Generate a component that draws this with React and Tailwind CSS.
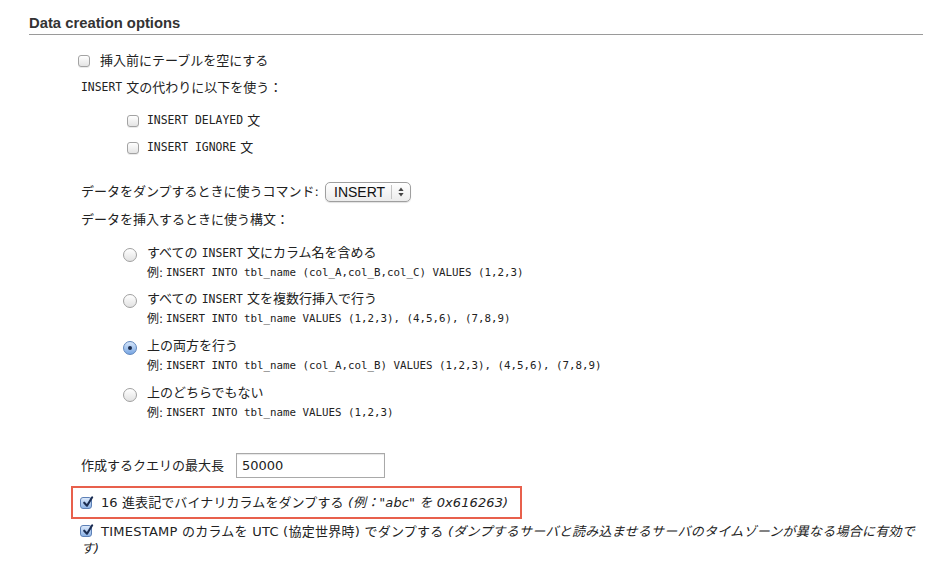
import React from 'react';

const sans = "font-['DejaVu_Sans','Noto_Sans_CJK_JP',sans-serif]";
const mono = "font-['DejaVu_Sans_Mono','Noto_Sans_CJK_JP',monospace]";

// mac-style checkbox drawn with spans
const Checkbox = ({ checked = false, className = '' }) =>
  checked ? (
    <span
      className={`relative inline-block w-[12px] h-[12px] shrink-0 rounded-[3px] border border-[#5d80b6] bg-gradient-to-b from-[#dce9fb] to-[#8db3e6] ${className}`}
    >
      <svg viewBox="0 0 12 12" className="absolute left-[1px] top-[-3px] w-[12px] h-[13px]">
        <path d="M2.2 7.2 L5 10.2 L10.2 1.8" fill="none" stroke="#1b2d52" strokeWidth="2.1" strokeLinecap="round" strokeLinejoin="round" />
      </svg>
    </span>
  ) : (
    <span
      className={`inline-block w-[12px] h-[12px] shrink-0 rounded-[3px] border border-[#a3a3a3] bg-gradient-to-b from-[#ffffff] to-[#e4e4e4] shadow-[0_1px_0_rgba(0,0,0,0.08)] ${className}`}
    />
  );

const Radio = ({ checked = false }) =>
  checked ? (
    <span className="mt-[5px] mr-[10px] flex items-center justify-center w-[14px] h-[14px] shrink-0 rounded-full border border-[#5f86bd] bg-gradient-to-b from-[#d6e6fa] to-[#78a6e2]">
      <span className="w-[4px] h-[4px] rounded-full bg-[#1a2a4a]" />
    </span>
  ) : (
    <span className="mt-[5px] mr-[10px] inline-block w-[14px] h-[14px] shrink-0 rounded-full border border-[#a0a0a0] bg-gradient-to-b from-[#ffffff] to-[#e2e2e2]" />
  );

const Code = ({ children }) => <span className={`${mono} text-[10.8px]`}>{children}</span>;

const syntaxOptions = [
  { label: 'カラム名', text: ['すべての ', 'INSERT', ' 文にカラム名を含める'], example: 'INSERT INTO tbl_name (col_A,col_B,col_C) VALUES (1,2,3)', mt: 'mt-[13px]' },
  { label: '複数行', text: ['すべての ', 'INSERT', ' 文を複数行挿入で行う'], example: 'INSERT INTO tbl_name VALUES (1,2,3), (4,5,6), (7,8,9)', mt: 'mt-[6px]' },
  { label: '両方', text: ['上の両方を行う'], example: 'INSERT INTO tbl_name (col_A,col_B) VALUES (1,2,3), (4,5,6), (7,8,9)', mt: 'mt-[7px]', checked: true },
  { label: 'なし', text: ['上のどちらでもない'], example: 'INSERT INTO tbl_name VALUES (1,2,3)', mt: 'mt-[7px]' },
];

export default function App() {
  return (
    <div className={`${sans} bg-white text-[#222] text-[13px] w-[934px] h-[563px] overflow-hidden`}>
      <div className="pl-[29px] pr-[11px] pt-[13px]">
        {/* heading */}
        <h2 className="font-['Liberation_Sans',sans-serif] text-[14.8px] font-bold text-[#333] leading-[21px] border-b border-[#9a9a9a]">
          Data creation options
        </h2>

        <div className="pl-[52px] flex flex-col">
          <div className="mt-[16px] h-[20px] flex items-center">
            <Checkbox className="ml-[-3px] mr-[10px]" />
            <span>挿入前にテーブルを空にする</span>
          </div>

          <div className="mt-[7px] h-[20px] flex items-center">
            <span className={`${mono} text-[11.4px]`}>INSERT</span>
            <span>&nbsp;文の代わりに以下を使う：</span>
          </div>

          <div className="mt-[13px] h-[20px] pl-[46px] flex items-center">
            <Checkbox className="mr-[8px]" />
            <span className={`${mono} text-[11.4px]`}>INSERT DELAYED</span>
            <span>&nbsp;文</span>
          </div>
          <div className="mt-[7px] h-[20px] pl-[46px] flex items-center">
            <Checkbox className="mr-[8px]" />
            <span className={`${mono} text-[11.4px]`}>INSERT IGNORE</span>
            <span>&nbsp;文</span>
          </div>

          {/* command select */}
          <div className="mt-[24px] h-[20px] flex items-center">
            <span>データをダンプするときに使うコマンド:</span>
            <div className="ml-[6px] w-[86px] h-[20px] flex items-center rounded-[5px] border border-[#9f9f9f] bg-gradient-to-b from-[#ffffff] to-[#ececec] shadow-[0_1px_1px_rgba(0,0,0,0.12)]">
              <span className="pl-[8px] font-['Liberation_Sans',sans-serif] text-[14px] font-medium text-[#111] flex-1">INSERT</span>
              <span className="w-px h-[14px] bg-[#c4c4c4]" />
              <svg viewBox="0 0 6 10" className="w-[6px] h-[10px] mx-[6px]">
                <path d="M3 0.5 L5.6 4 L0.4 4 Z" fill="#444" />
                <path d="M3 9.5 L5.6 6 L0.4 6 Z" fill="#444" />
              </svg>
            </div>
          </div>

          <div className="mt-[8px] h-[20px] flex items-center">
            <span>データを挿入するときに使う構文：</span>
          </div>

          {/* syntax radios */}
          {syntaxOptions.map((opt) => (
            <div key={opt.label} className={`${opt.mt} pl-[42px] flex flex-col`}>
              <div className="h-[20px] flex items-start">
                <Radio checked={opt.checked} />
                <span className="leading-[20px]">
                  {opt.text.map((t, i) =>
                    t === 'INSERT' ? (
                      <span key={i} className={`${mono} text-[11.4px]`}>{t}</span>
                    ) : (
                      <span key={i}>{t}</span>
                    )
                  )}
                </span>
              </div>
              <div className="h-[20px] pl-[24px] flex items-center">
                <span className="text-[12px]">例:</span>
                <span className="w-[3px]" />
                <Code>{opt.example}</Code>
              </div>
            </div>
          ))}

          {/* max length */}
          <div className="mt-[30px] h-[25px] flex items-center">
            <span>作成するクエリの最大長</span>
            <div className="ml-[12px] w-[149px] h-[25px] flex items-center border border-[#a9a9a9] shadow-[inset_0_1px_1px_rgba(0,0,0,0.1)] pl-[5px] text-[13px]">
              50000
            </div>
          </div>

          {/* hex row, highlighted */}
          <div className="mt-[15px] h-[20px] flex items-center">
            <div className="relative flex items-center">
              <span className="absolute -left-[10px] -right-[14px] -top-[7px] -bottom-[6px] border-2 border-[#e8604c] pointer-events-none" />
              <Checkbox checked className="ml-[-1px] mr-[9px]" />
              <span className="tracking-[0.1px]">16 進表記でバイナリカラムをダンプする <i>(例："abc" を 0x616263)</i></span>
            </div>
          </div>

          <div className="mt-[10px] leading-[17px] pr-[4px]">
            <span className="whitespace-nowrap tracking-[0.25px]">
              <Checkbox checked className="ml-[-1px] mr-[9px] align-[-1px]" />
              TIMESTAMP のカラムを UTC (協定世界時) でダンプする{' '}
              <i>(ダンプするサーバと読み込ませるサーバのタイムゾーンが異なる場合に有効で</i>
            </span>
            <br />
            <i>す)</i>
          </div>
        </div>
      </div>
    </div>
  );
}
